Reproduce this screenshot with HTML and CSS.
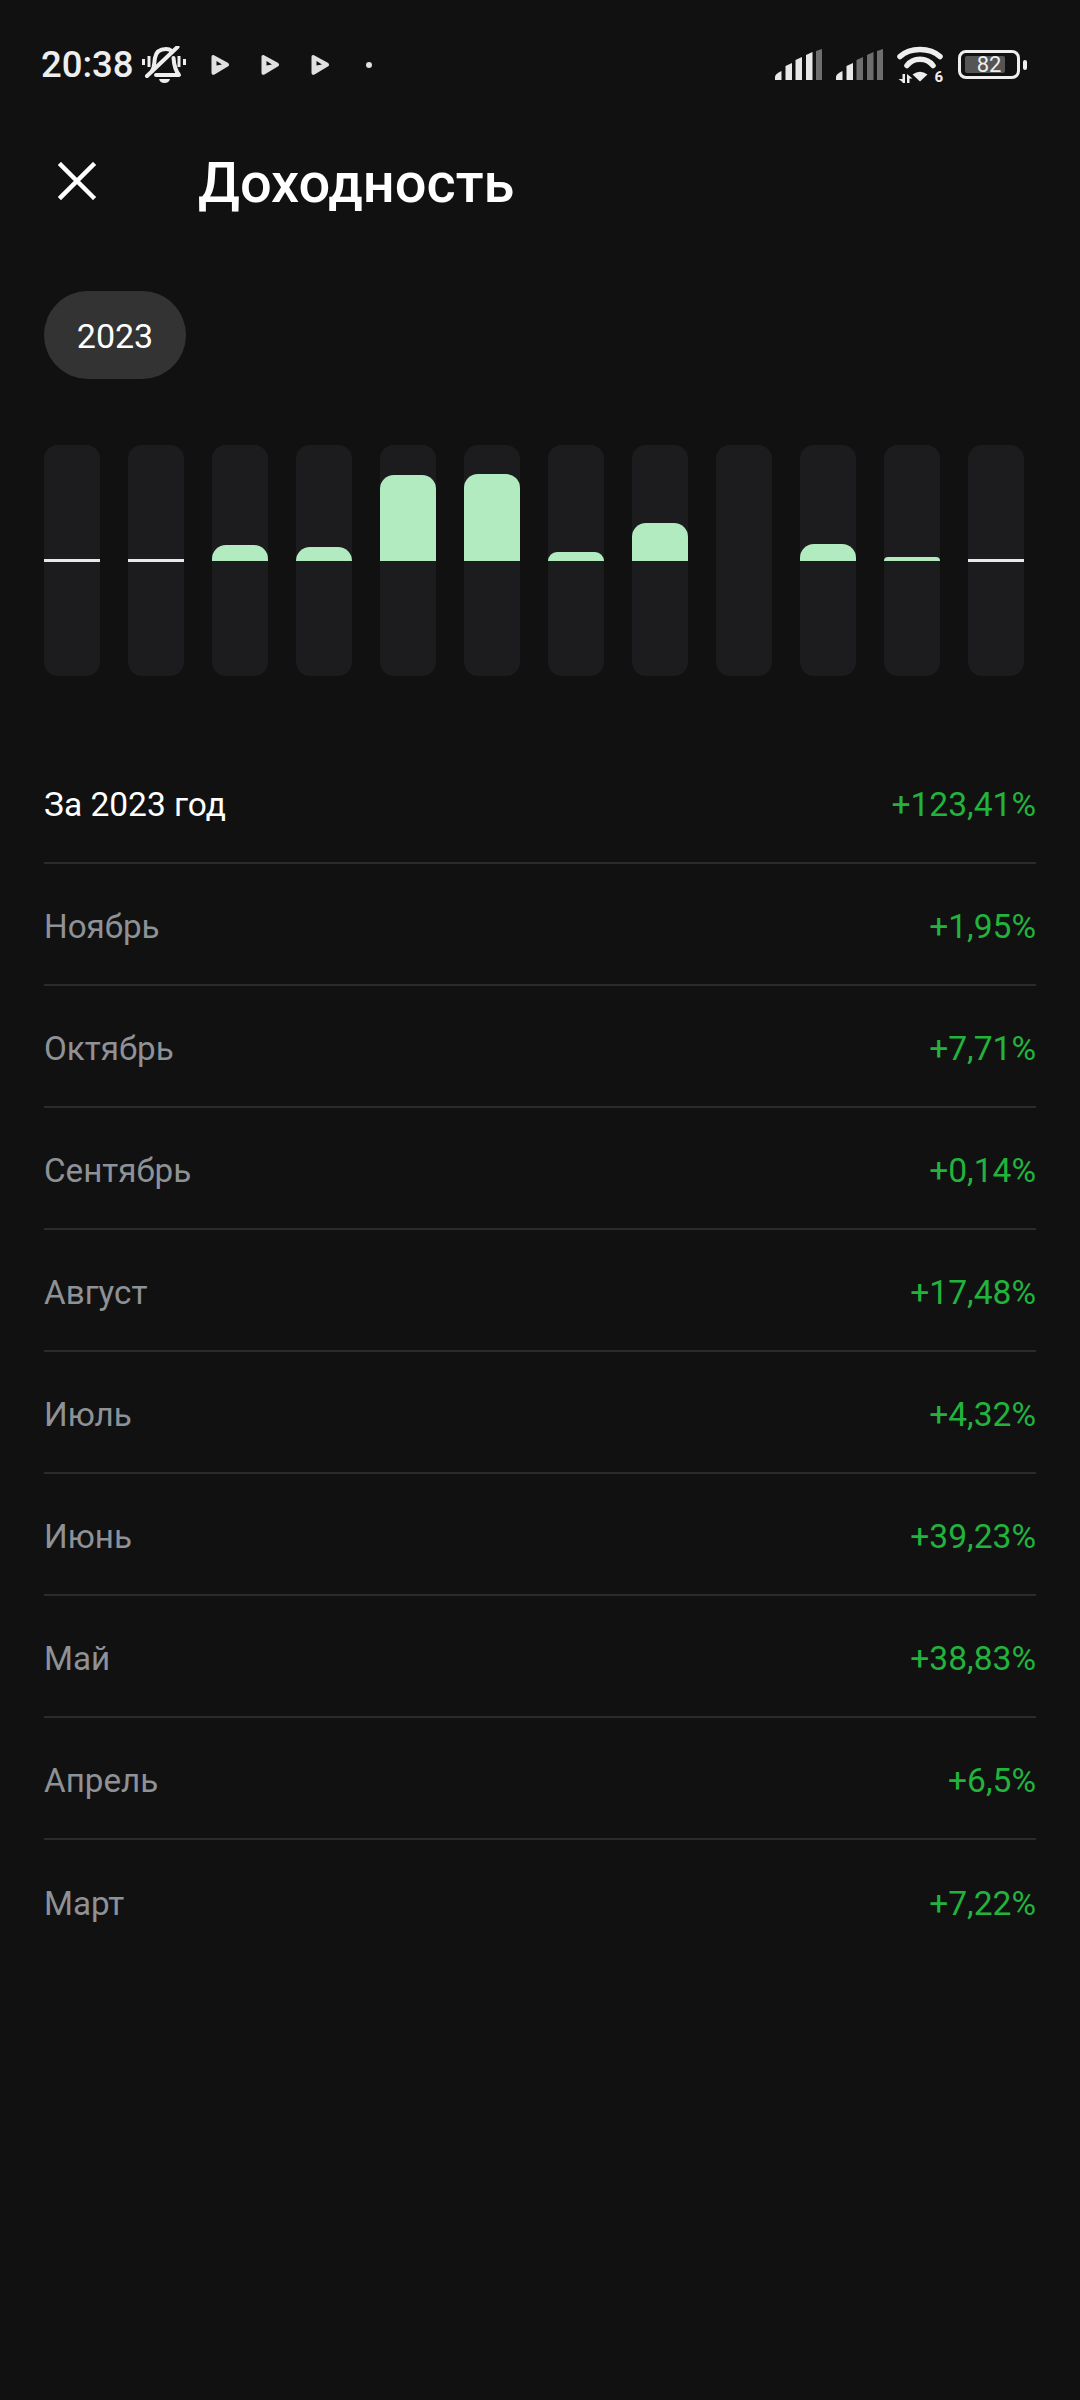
FILE: index.html
```html
<!DOCTYPE html>
<html lang="ru">

<head>
    <meta charset="UTF-8">
    <meta name="viewport" content="width=device-width, initial-scale=1.0">
    <title>Доходность</title>
    <link rel="stylesheet" href="styles.css">
</head>

<body>
    <div class="status-bar">
        <div class="status-left">
            <span class="time">20:38</span>
            <svg class="icon-bell" viewBox="0 0 44 38" fill="none" stroke="#eeeeee" stroke-width="4" stroke-linecap="round" stroke-linejoin="round">
                <path d="M10 25C13 20 12 16 13 12 14 6 18 3 24 3 26 3 28 3.500 30 5"/>
                <path d="M31.500 12C32 19 33 24 37 29H14"/>
                <path d="M5 30 35.500 1"/>
                <path fill="#eeeeee" stroke="none" d="M17 33h11q-1 4-5.500 4T17 33z"/>
                <path d="M1.500 13v6M7 10v11M37 10v11M42.500 13v6" stroke-width="3" stroke-linecap="butt"/>
            </svg>
            <svg class="icon-play" viewBox="0 0 18 20"><path fill="#e0e0e0" fill-rule="evenodd" d="M3 .300 16.800 7.700c1.700 1 1.700 3 0 3.900L3.500 19.500C1.800 20.400 .500 19.500 .500 17.500V2.300C.500 .500 1.500-.400 3 .300zM5.500 6v4.600L11 9.500z"/></svg>
            <svg class="icon-play" viewBox="0 0 18 20"><path fill="#e0e0e0" fill-rule="evenodd" d="M3 .300 16.800 7.700c1.700 1 1.700 3 0 3.900L3.500 19.500C1.800 20.400 .500 19.500 .500 17.500V2.300C.500 .500 1.500-.400 3 .300zM5.500 6v4.600L11 9.500z"/></svg>
            <svg class="icon-play" viewBox="0 0 18 20"><path fill="#e0e0e0" fill-rule="evenodd" d="M3 .300 16.800 7.700c1.700 1 1.700 3 0 3.900L3.500 19.500C1.800 20.400 .500 19.500 .500 17.500V2.300C.500 .500 1.500-.400 3 .300zM5.500 6v4.600L11 9.500z"/></svg>
            <span class="status-dot"></span>
        </div>
        <div class="status-right">
            <svg class="icon-signal" viewBox="0 0 47 31">
                <path fill="#e8e8e8" d="M0 31v-3q0-3 6.500-6v9zM10.500 31V17l6.500-3v17zM20.500 31V11l6.500-3v23zM31 31V6l6.500-3v28z"/>
                <path fill="#6e6e6e" d="M41 31V2l6-2v31z"/>
            </svg>
            <svg class="icon-signal" viewBox="0 0 47 31">
                <path fill="#e8e8e8" d="M0 31v-3q0-3 6.500-6v9zM10.500 31V17l6.500-3v17z"/>
                <path fill="#6e6e6e" d="M20.500 31V11l6.500-3v23zM31 31V6l6.500-3v28zM41 31V2l6-2v31z"/>
            </svg>
            <div class="wifi">
                <svg class="icon-wifi" viewBox="0 0 46 41">
                    <g fill="none" stroke="#eeeeee" stroke-width="5.500" stroke-linecap="round">
                        <path d="M3 12.500C13 3 33 3 43 12.500"/>
                        <path d="M10 21.500C16 13 30 13 36 21.500"/>
                    </g>
                    <path fill="#eeeeee" d="M15.500 30.500Q23 25 30.500 30.500L23 37.500z"/>
                    <path fill="#eeeeee" d="M5.500 30H8v9H5.500v-1L1.500 35h4zM10 30l5.500 4.500H12.500V39H10z"/>
                </svg>
                <span class="wifi-six">6</span>
            </div>
            <div class="battery">
                <div class="battery-body">
                    <div class="battery-fill"></div>
                    <span class="battery-text">82</span>
                </div>
                <div class="battery-nub"></div>
            </div>
        </div>
    </div>

    <div class="header">
        <svg class="icon-close" viewBox="0 0 38 38" fill="none" stroke="#ffffff" stroke-width="4.500" stroke-linecap="square">
            <path d="M3 3 35 35M35 3 3 35"/>
        </svg>
        <h1>Доходность</h1>
    </div>

    <div class="year-pill">2023</div>

    <div class="chart">
        <div class="track"><div class="upper"><div class="zero"></div></div></div>
        <div class="track"><div class="upper"><div class="zero"></div></div></div>
        <div class="track"><div class="upper"><div class="bar" style="height: 16px"></div></div></div>
        <div class="track"><div class="upper"><div class="bar" style="height: 14px"></div></div></div>
        <div class="track"><div class="upper"><div class="bar" style="height: 86px"></div></div></div>
        <div class="track"><div class="upper"><div class="bar" style="height: 87px"></div></div></div>
        <div class="track"><div class="upper"><div class="bar" style="height: 9px"></div></div></div>
        <div class="track"><div class="upper"><div class="bar" style="height: 38px"></div></div></div>
        <div class="track"><div class="upper"></div></div>
        <div class="track"><div class="upper"><div class="bar" style="height: 17px"></div></div></div>
        <div class="track"><div class="upper"><div class="bar" style="height: 4px"></div></div></div>
        <div class="track"><div class="upper"><div class="zero"></div></div></div>
    </div>

    <div class="list">
        <div class="row total"><span class="label">За 2023 год</span><span class="value">+123,41%</span></div>
        <div class="row"><span class="label">Ноябрь</span><span class="value">+1,95%</span></div>
        <div class="row"><span class="label">Октябрь</span><span class="value">+7,71%</span></div>
        <div class="row"><span class="label">Сентябрь</span><span class="value">+0,14%</span></div>
        <div class="row"><span class="label">Август</span><span class="value">+17,48%</span></div>
        <div class="row"><span class="label">Июль</span><span class="value">+4,32%</span></div>
        <div class="row"><span class="label">Июнь</span><span class="value">+39,23%</span></div>
        <div class="row"><span class="label">Май</span><span class="value">+38,83%</span></div>
        <div class="row"><span class="label">Апрель</span><span class="value">+6,5%</span></div>
        <div class="row"><span class="label">Март</span><span class="value">+7,22%</span></div>
    </div>
</body>

</html>
```

FILE: styles.css
```css
body {
    font-family: Roboto, "Liberation Sans", sans-serif;
    background-color: #111112;
    color: #ffffff;
    margin: 0;
    padding: 0;
    width: 1080px;
    height: 2400px;
    overflow: hidden;
}

/* status bar */
.status-bar {
    height: 126px;
    box-sizing: border-box;
    padding: 3px 53px 0 41px;
    display: flex;
    justify-content: space-between;
    align-items: center;
}

.status-left {
    display: flex;
    align-items: center;
}

.time {
    font-size: 36.500px;
    font-weight: 500;
    color: #eeeeee;
    width: 101px;
}

.icon-bell {
    width: 44px;
    height: 38px;
    margin-right: 25px;
}

.icon-play {
    width: 18px;
    height: 20px;
    margin-right: 32px;
}

.status-dot {
    width: 6px;
    height: 6px;
    border-radius: 50%;
    background-color: #e0e0e0;
    margin-left: 5px;
}

.status-right {
    display: flex;
    align-items: center;
}

.icon-signal {
    width: 47px;
    height: 31px;
    margin-right: 14px;
}

.wifi {
    position: relative;
    width: 46px;
    height: 41px;
    margin-right: 15px;
}

.icon-wifi {
    display: block;
    width: 46px;
    height: 41px;
}

/* sits beside the arcs, over the lower right corner of the icon */
.wifi-six {
    position: absolute;
    right: 0;
    bottom: 0;
    font-size: 15px;
    line-height: 15px;
    font-weight: 700;
    color: #eeeeee;
}

.battery {
    display: flex;
    align-items: center;
}

.battery-body {
    position: relative;
    width: 62px;
    height: 29px;
    box-sizing: border-box;
    border: 3px solid #eeeeee;
    border-radius: 8px;
}

.battery-fill {
    position: absolute;
    left: 4px;
    top: 3px;
    width: 40px;
    height: 17px;
    background-color: #555555;
    border-radius: 2px;
}

.battery-text {
    position: absolute;
    left: 0;
    right: 0;
    top: 0;
    bottom: 0;
    display: flex;
    justify-content: center;
    align-items: center;
    font-size: 22px;
    color: #eeeeee;
}

.battery-nub {
    width: 4px;
    height: 10px;
    margin-left: 3px;
    background-color: #eeeeee;
    border-radius: 2px;
}

/* header */
.header {
    height: 112px;
    padding-left: 58px;
    display: flex;
    align-items: center;
}

.icon-close {
    width: 38px;
    height: 38px;
    margin: 0 102px 2px 0;
}

h1 {
    margin: 0;
    padding-top: 2px;
    font-size: 56px;
    font-weight: 500;
}

.year-pill {
    width: 142px;
    height: 88px;
    box-sizing: border-box;
    padding-top: 2px;
    margin: 53px 0 0 44px;
    border-radius: 44px;
    background-color: #333333;
    display: flex;
    justify-content: center;
    align-items: center;
    font-size: 34px;
}

/* chart */
.chart {
    margin: 66px 0 0 44px;
    display: flex;
    gap: 28px;
}

.track {
    width: 56px;
    height: 231px;
    border-radius: 14px;
    background-color: #1c1c1e;
}

.upper {
    height: 116px;
    display: flex;
    flex-direction: column;
    justify-content: flex-end;
}

.bar {
    background-color: #b2ebc0;
    border-radius: 14px 14px 0 0;
}

.zero {
    height: 3px;
    margin-bottom: -1px;
    background-color: #e8e8e8;
}

/* list */
.list {
    margin: 66px 44px 0 44px;
}

.row {
    height: 122px;
    box-sizing: border-box;
    padding-top: 4px;
    border-bottom: 2px solid #2a2b2c;
    display: flex;
    justify-content: space-between;
    align-items: center;
    font-size: 33.6px;
    color: #8e9196;
}

.row:last-child {
    border-bottom: none;
}

.label {
    font-size: 33.2px;
}

.total {
    color: #ffffff;
}

.total .label {
    font-size: 33.5px;
}

.value {
    color: #22b33c;
}
```
